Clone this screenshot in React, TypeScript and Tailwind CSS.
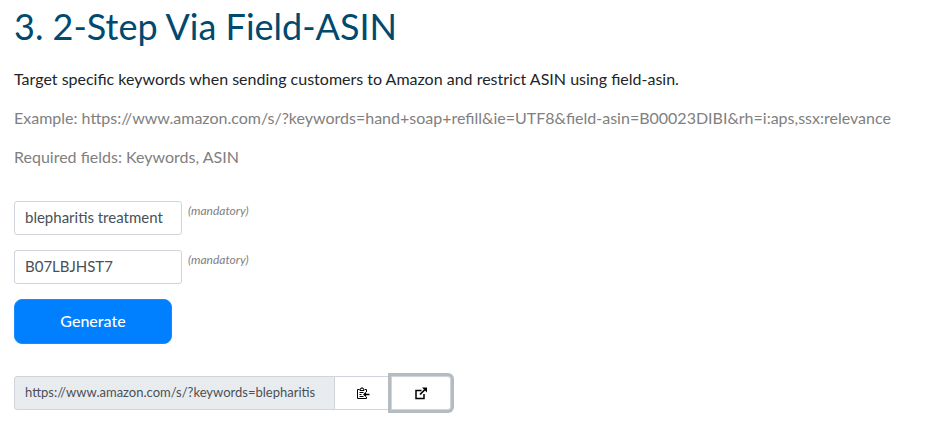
import * as React from "react";

interface FieldProps {
    id: string;
    label: string;
    value: string;
    onChange: (value: string) => void;
}

const ClipboardIcon = () => (
    <svg width="13" height="13" viewBox="0 0 13 13" fill="none" stroke="#000" aria-hidden="true">
        <path d="M2.5 2.5h-2v9h9V10M8 2.5h1.5V5"/>
        <path d="M3 3.5h4V2H6V1H4v1H3z"/>
        <path d="M2.5 5.5h4M2.5 7.5h2M2.5 9.5h4"/>
        <path d="M12.5 7.5H7M9 5.5l-2 2 2 2" strokeWidth="1.3"/>
    </svg>
);

const ExternalIcon = () => (
    <svg width="13" height="13" viewBox="0 0 13 13" fill="none" stroke="#000" aria-hidden="true">
        <path d="M6.5 3.5H1v8h8V7" strokeWidth="1.5"/>
        <path d="M5 7.5l5-5" strokeWidth="1.7"/>
        <path d="M7 .5h5v5z" fill="#000" stroke="none"/>
    </svg>
);

const MandatoryField: React.FC<FieldProps> = ({id, label, value, onChange}) => (
    <div className="flex items-start gap-1.5">
        <input
            id={id}
            type="text"
            required
            aria-label={label}
            value={value}
            onChange={(e) => onChange(e.target.value)}
            className="h-[34px] w-42 rounded-[3px] border border-[#ced4da] bg-white px-2.5 pb-0.5 text-[15px] text-[#495057]"
        />
        <label htmlFor={id} className="text-xs leading-5 text-[#808080] italic">(mandatory)</label>
    </div>
);

export default function App() {
    const [keywords, setKeywords] = React.useState("blepharitis treatment");
    const [asin, setAsin] = React.useState("B07LBJHST7");
    const [url, setUrl] = React.useState("https://www.amazon.com/s/?keywords=blepharitis");

    const generate = (event: React.FormEvent) => {
        event.preventDefault();
        const words = encodeURIComponent(keywords).replace(/%20/g, "+");
        setUrl(`https://www.amazon.com/s/?keywords=${words}&ie=UTF8&field-asin=${asin}&rh=i:aps,ssx:relevance`);
    };

    return (
        <main className="bg-white px-3.5 pt-1.5 pb-5 font-[Lato,sans-serif] text-base text-[#212529]">
            <h1 className="text-[36px] leading-10 text-[#00496f]">3. 2-Step Via Field-ASIN</h1>

            <div className="mt-[21px] flex flex-col gap-[15px] leading-6">
                <p>Target specific keywords when sending customers to Amazon and restrict ASIN using field-asin.</p>
                <p className="break-words text-[#808080]">
                    Example: https://www.amazon.com/s/?keywords=hand+soap+refill&amp;ie=UTF8&amp;field-asin=B00023DIBI&amp;rh=i:aps,ssx:relevance
                </p>
                <p className="text-[#808080]">Required fields: Keywords, ASIN</p>
            </div>

            <form onSubmit={generate} className="mt-8 flex flex-col items-start gap-[15px]">
                <MandatoryField id="keywords" label="Keywords" value={keywords} onChange={setKeywords}/>
                <MandatoryField id="asin" label="ASIN" value={asin} onChange={setAsin}/>
                <button
                    type="submit"
                    className="h-[45px] w-[158px] rounded-lg border border-[#1a8cff] bg-[#007fff] pb-0.5 text-base font-medium text-white">
                    Generate
                </button>
            </form>

            <div className="mt-8 flex h-[34px]">
                <input
                    id="result"
                    type="text"
                    readOnly
                    aria-label="Generated link"
                    value={url}
                    className="w-[321px] rounded-l-[3px] border border-[#ced4da] bg-[#e9ecef] pl-2.5 text-[13px] text-[#495057]"
                />
                <button
                    type="button"
                    aria-label="Copy link"
                    onClick={() => navigator.clipboard.writeText(url)}
                    className="flex w-14 items-center justify-center border-y border-[#ced4da] bg-white">
                    <ClipboardIcon/>
                </button>
                <a
                    href={url}
                    target="_blank"
                    rel="noreferrer"
                    aria-label="Open link"
                    className="flex w-15 items-center justify-center rounded-r-[3px] border border-[#ced4da] bg-white ring-3 ring-[#b4bbc1]">
                    <ExternalIcon/>
                </a>
            </div>
        </main>
    );
}
